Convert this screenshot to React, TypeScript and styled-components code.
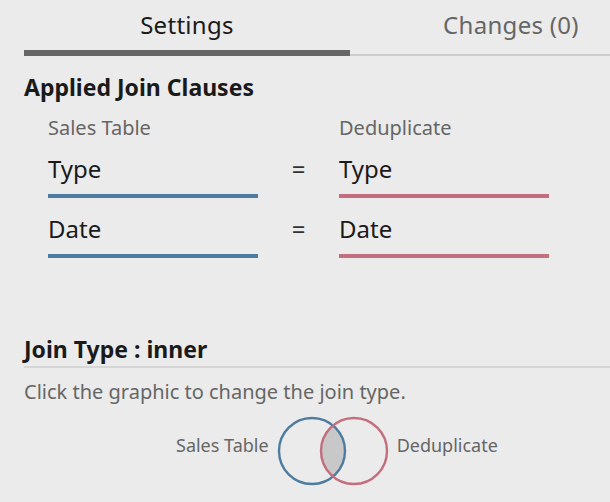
import styled, { createGlobalStyle } from 'styled-components'

const GlobalStyle = createGlobalStyle`
  html, body {
    margin: 0;
    padding: 0;
    background: #ebebeb;
  }
  body {
    font-family: 'Noto Sans', 'Open Sans', sans-serif;
    color: #1a1a1a;
  }
`

const Panel = styled.div`
  width: 610px;
  height: 502px;
  background: #ebebeb;
  overflow: hidden;
`

const Tabs = styled.div`
  display: flex;
  align-items: flex-start;
  padding-left: 24px;
`

const Tab = styled.div<{ active?: boolean }>`
  flex: ${p => (p.active ? '0 0 326px' : '1')};
  box-sizing: border-box;
  height: 56px;
  padding-top: 10px;
  padding-left: ${p => (p.active ? '0' : '62px')};
  text-align: center;
  font-size: 24px;
  line-height: 30px;
  letter-spacing: 0.3px;
  color: ${p => (p.active ? '#1a1a1a' : '#666666')};
  border-bottom: ${p => (p.active ? '6px solid #666666' : '2px solid #cccccc')};
`

const Section = styled.div`
  padding: 0 24px;
`

const Heading = styled.h2<{ top: string }>`
  margin: 0;
  margin-top: ${p => p.top};
  font-size: 23px;
  font-weight: 700;
  line-height: 30px;
  color: #1a1a1a;
`

const ClauseGrid = styled.div`
  display: grid;
  grid-template-columns: 210px 81px 210px;
  row-gap: 15px;
  margin-left: 48px;
  margin-top: 14px;
`

const ColLabel = styled.div`
  height: 22px;
  font-size: 20px;
  line-height: 24px;
  color: #666666;
`

const Field = styled.div<{ color: string }>`
  height: 41px;
  border-bottom: 4px solid ${p => p.color};
  font-size: 24px;
  line-height: 32px;
  color: #1a1a1a;
`

const Equals = styled.div`
  text-align: center;
  font-size: 24px;
  line-height: 32px;
  color: #333333;
`

const Divider = styled.div`
  margin-top: 2px;
  margin-left: 24px;
  height: 2px;
  background: #d6d6d6;
`

const Hint = styled.p`
  margin: 11px 0 0;
  font-size: 20px;
  line-height: 26px;
  color: #666666;
`

const Venn = styled.div`
  display: flex;
  align-items: center;
  gap: 8px;
  margin-top: 10px;
  padding-left: 152px;
  cursor: pointer;
`

const VennLabel = styled.span`
  margin-bottom: 12px;
  font-size: 18px;
  line-height: 24px;
  color: #666666;
`

export default function App() {
  return (
    <Panel>
      <GlobalStyle />
      <Tabs>
        <Tab active>Settings</Tab>
        <Tab>Changes (0)</Tab>
      </Tabs>
      <Section>
        <Heading top="16px">Applied Join Clauses</Heading>
      </Section>
      <ClauseGrid>
        <ColLabel>Sales Table</ColLabel>
        <div />
        <ColLabel>Deduplicate</ColLabel>
        <Field color="#4e7ca1">Type</Field>
        <Equals>=</Equals>
        <Field color="#c36e7e">Type</Field>
        <Field color="#4e7ca1">Date</Field>
        <Equals>=</Equals>
        <Field color="#c36e7e">Date</Field>
      </ClauseGrid>
      <Section>
        <Heading top="76px">Join Type : inner</Heading>
      </Section>
      <Divider />
      <Section>
        <Hint>Click the graphic to change the join type.</Hint>
        <Venn>
          <VennLabel>Sales Table</VennLabel>
          <svg width="112" height="72" viewBox="0 0 112 72">
            <defs>
              <clipPath id="leftCircle">
                <circle cx="35" cy="36" r="33" />
              </clipPath>
            </defs>
            <circle cx="77" cy="36" r="33" fill="#c8c8c8" clipPath="url(#leftCircle)" />
            <circle cx="35" cy="36" r="33" fill="none" stroke="#4e7ca1" strokeWidth="2.4" />
            <circle cx="77" cy="36" r="33" fill="none" stroke="#c36e7e" strokeWidth="2.4" />
          </svg>
          <VennLabel>Deduplicate</VennLabel>
        </Venn>
      </Section>
    </Panel>
  )
}
